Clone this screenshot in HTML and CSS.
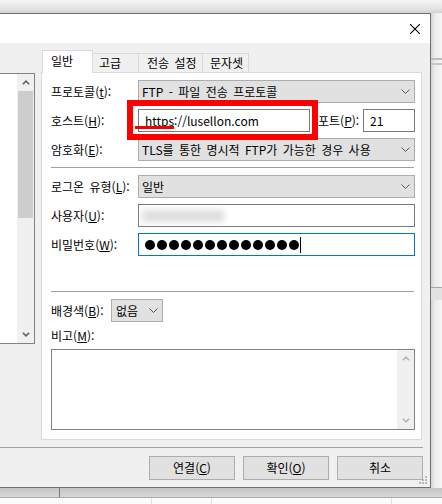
FILE: index.html
```html
<!DOCTYPE html>
<html lang="ko">
<head>
<meta charset="utf-8">
<title>사이트 관리자</title>
<link rel="stylesheet" href="styles.css">
</head>
<body>
<div class="screen">
  <div class="topshade"></div>
  <div class="middle">
    <div class="dialog">
      <div class="titlebar">
        <svg class="close" width="10" height="10" viewBox="0 0 10 10"><path d="M0 0L10 10M10 0L0 10" stroke="#000" stroke-width="1.1" fill="none"/></svg>
      </div>
      <div class="dbody">
        <div class="sitelist">
          <div class="vscroll">
            <div class="sarrow"><svg width="8" height="5" viewBox="0 0 8 5"><polyline points="0.8,4.3 4,1.2 7.2,4.3" stroke="#606060" stroke-width="1.6" fill="none"/></svg></div>
            <div class="thumb"></div>
            <div class="sfill"></div>
            <div class="sarrow"><svg width="8" height="5" viewBox="0 0 8 5"><polyline points="0.8,0.7 4,3.8 7.2,0.7" stroke="#606060" stroke-width="1.6" fill="none"/></svg></div>
          </div>
        </div>
        <div class="tabsection">
          <div class="tabs">
            <div class="tab active t1">일반</div>
            <div class="tab t2">고급</div>
            <div class="tab t3">전송 설정</div>
            <div class="tab t4">문자셋</div>
          </div>
          <div class="panel">
            <div class="row">
              <div class="lbl">프로토콜(<u>t</u>):</div>
              <div class="select grow"><span>FTP - 파일 전송 프로토콜</span><svg class="chev" width="9" height="5" viewBox="0 0 9 5"><polyline points="0.5,0.5 4.5,4.5 8.5,0.5" stroke="#555" stroke-width="1" fill="none"/></svg></div>
            </div>
            <div class="row">
              <div class="lbl">호스트(<u>H</u>):</div>
              <div class="input host">https://lusellon.com</div>
              <div class="plbl">포트(<u>P</u>):</div>
              <div class="input port grow">21</div>
            </div>
            <div class="row">
              <div class="lbl">암호화(<u>E</u>):</div>
              <div class="select grow"><span>TLS를 통한 명시적 FTP가 가능한 경우 사용</span><svg class="chev" width="9" height="5" viewBox="0 0 9 5"><polyline points="0.5,0.5 4.5,4.5 8.5,0.5" stroke="#555" stroke-width="1" fill="none"/></svg></div>
            </div>
            <div class="sep"></div>
            <div class="row">
              <div class="lbl">로그온 유형(<u>L</u>):</div>
              <div class="select grow"><span>일반</span><svg class="chev" width="9" height="5" viewBox="0 0 9 5"><polyline points="0.5,0.5 4.5,4.5 8.5,0.5" stroke="#555" stroke-width="1" fill="none"/></svg></div>
            </div>
            <div class="row">
              <div class="lbl">사용자(<u>U</u>):</div>
              <div class="input grow user"><div class="blurred"></div></div>
            </div>
            <div class="row pwrow">
              <div class="lbl">비밀번호(<u>W</u>):</div>
              <div class="input grow focus">
                <div class="dots">
                  <i></i><i></i><i></i><i></i><i></i><i></i><i></i><i></i><i></i><i></i><i></i><i></i><i></i>
                </div>
                <div class="caret"></div>
              </div>
            </div>
            <div class="sep"></div>
            <div class="row">
              <div class="lbl bglbl">배경색(<u>B</u>):</div>
              <div class="select small"><span>없음</span><svg class="chev" width="9" height="5" viewBox="0 0 9 5"><polyline points="0.5,0.5 4.5,4.5 8.5,0.5" stroke="#555" stroke-width="1" fill="none"/></svg></div>
            </div>
            <div class="memolbl">비고(<u>M</u>):</div>
            <div class="memo">
              <div class="mscroll">
                <div class="sarrow"><svg width="8" height="5" viewBox="0 0 8 5"><polyline points="0.8,4.3 4,1.2 7.2,4.3" stroke="#b4b4b4" stroke-width="1.6" fill="none"/></svg></div>
                <div class="sfill"></div>
                <div class="sarrow"><svg width="8" height="5" viewBox="0 0 8 5"><polyline points="0.8,0.7 4,3.8 7.2,0.7" stroke="#b4b4b4" stroke-width="1.6" fill="none"/></svg></div>
              </div>
            </div>
          </div>
        </div>
      </div>
      <div class="footsep"></div>
      <div class="buttons">
        <div class="btn">연결(<u>C</u>)</div>
        <div class="btn">확인(<u>O</u>)</div>
        <div class="btn">취소</div>
      </div>
      <svg class="grip" width="8" height="8" viewBox="0 0 8 8">
        <rect x="6" y="0" width="2" height="2" fill="#b8b8b8"/>
        <rect x="3" y="3" width="2" height="2" fill="#b8b8b8"/>
        <rect x="6" y="3" width="2" height="2" fill="#b8b8b8"/>
        <rect x="0" y="6" width="2" height="2" fill="#b8b8b8"/>
        <rect x="3" y="6" width="2" height="2" fill="#b8b8b8"/>
        <rect x="6" y="6" width="2" height="2" fill="#b8b8b8"/>
      </svg>
    </div>
    <div class="rightside">
      <div class="rs-gap1"></div>
      <div class="rs-line1"></div>
      <div class="rs-gap2"></div>
      <div class="rs-line2"></div>
      <div class="rs-gap3"></div>
      <div class="rs-line3"></div>
      <div class="rs-band"></div>
    </div>
  </div>
  <div class="behind">
    <div class="bband"><div class="bb-left"></div><div class="bb-rest"></div></div>
    <div class="bline"></div>
    <div class="brow">
      <div class="bc c1"></div><div class="bc c2"></div><div class="bc c3"></div><div class="bc c4"></div>
    </div>
  </div>
  <div class="redbox"></div>
  <div class="redline"></div>
</div>
</body>
</html>
```

FILE: styles.css
```css
html, body {
  margin: 0;
  padding: 0;
}
body {
  width: 442px;
  height: 504px;
  overflow: hidden;
  font-family: "Noto Sans CJK KR", "Noto Sans", sans-serif;
  font-size: 12px;
  line-height: 16px;
  word-spacing: 2px;
  color: #000;
}
u {
  text-decoration: underline;
  text-underline-offset: 1px;
}
.screen {
  position: relative;
  width: 442px;
  height: 504px;
  display: flex;
  flex-direction: column;
  background: #f0f0f0;
}
.topshade {
  flex: none;
  height: 13px;
  background: linear-gradient(#f4f4f4, #e2e2e2 70%, #d2d2d2);
}
.middle {
  flex: none;
  height: 475px;
  display: flex;
}
.dialog {
  position: relative;
  flex: none;
  width: 431px;
  height: 475px;
  box-sizing: border-box;
  border: 1px solid #6f6f6f;
  border-left: none;
  background: #f0f0f0;
  display: flex;
  flex-direction: column;
}
.titlebar {
  flex: none;
  height: 29px;
  background: #fff;
  display: flex;
  justify-content: flex-end;
  align-items: center;
  padding-right: 10px;
}
.close {
  display: block;
  margin-top: 1px;
}
.dbody {
  flex: none;
  display: flex;
  align-items: flex-start;
  gap: 6px;
  padding-top: 7px;
}
.sitelist {
  flex: none;
  width: 35px;
  height: 271px;
  margin-top: 23px;
  box-sizing: border-box;
  border: 1px solid #828282;
  border-left: none;
  background: #fff;
  display: flex;
  justify-content: flex-end;
}
.vscroll {
  width: 17px;
  height: 100%;
  background: #f0f0f0;
  display: flex;
  flex-direction: column;
  align-items: center;
}
.sarrow {
  flex: none;
  width: 17px;
  height: 17px;
  display: flex;
  align-items: center;
  justify-content: center;
}
.sarrow svg {
  display: block;
}
.thumb {
  flex: none;
  width: 15px;
  height: 127px;
  background: #cdcdcd;
}
.sfill {
  flex: 1;
}
.tabsection {
  flex: none;
  width: 381px;
}
.tabs {
  display: flex;
  align-items: flex-end;
  height: 22px;
  padding-left: 1px;
}
.tab {
  flex: none;
  box-sizing: border-box;
  height: 19px;
  border: 1px solid #d9d9d9;
  border-bottom: none;
  background: #f0f0f0;
  display: flex;
  align-items: center;
  margin-left: -1px;
  white-space: nowrap;
}
.tab.active {
  position: relative;
  z-index: 1;
  height: 23px;
  margin-bottom: -1px;
  margin-left: 0;
  background: #fff;
  padding-bottom: 2px;
}
.t1 { width: 51px; padding-left: 8px; }
.t2 { width: 47px; padding-left: 6px; }
.t3 { width: 65px; padding-left: 8px; }
.t4 { width: 47px; padding-left: 7px; }
.panel {
  box-sizing: border-box;
  height: 368px;
  border: 1px solid #d9d9d9;
  background: #fff;
  padding: 7px 6px 8px 9px;
}
.row {
  display: flex;
  align-items: center;
  height: 23px;
  margin-bottom: 6px;
}
.pwrow {
  margin-bottom: 35px;
}
.lbl {
  flex: none;
  width: 87px;
  white-space: nowrap;
}
.bglbl {
  width: 60px;
}
.grow {
  flex: 1;
}
.select {
  box-sizing: border-box;
  height: 23px;
  border: 1px solid #adadad;
  background: #e1e1e1;
  display: flex;
  align-items: center;
  justify-content: space-between;
  padding-left: 3px;
  padding-right: 4px;
  white-space: nowrap;
  overflow: hidden;
}
.select.small {
  flex: none;
  width: 52px;
  padding-left: 4px;
  padding-right: 4px;
}
.chev {
  flex: none;
  display: block;
}
.input {
  box-sizing: border-box;
  height: 23px;
  border: 1px solid #7a7a7a;
  background: #fff;
  display: flex;
  align-items: center;
  padding-left: 6px;
  white-space: nowrap;
}
.host {
  flex: none;
  width: 172px;
}
.plbl {
  flex: none;
  width: 45px;
  margin-left: 8px;
  white-space: nowrap;
}
.port {
  padding-left: 6px;
}
.user {
  padding-left: 3px;
}
.blurred {
  width: 82px;
  height: 12px;
  background: #d6d6d6;
  filter: blur(3px);
  opacity: 0.8;
}
.focus {
  border-color: #0078d7;
  padding-left: 6px;
}
.dots {
  display: flex;
  gap: 2px;
}
.dots i {
  display: block;
  width: 10px;
  height: 10px;
  border-radius: 50%;
  background: #000;
}
.caret {
  width: 1px;
  height: 16px;
  background: #000;
  margin-left: 1px;
}
.sep {
  height: 1px;
  background: #a0a0a0;
  margin-bottom: 7px;
  margin-right: 1px;
}
.memolbl {
  margin-top: 1px;
  height: 16px;
  margin-bottom: 5px;
  white-space: nowrap;
}
.memo {
  box-sizing: border-box;
  height: 81px;
  border: 1px solid #828282;
  background: #fff;
  display: flex;
  justify-content: flex-end;
}
.mscroll {
  width: 17px;
  height: 100%;
  background: #f0f0f0;
  display: flex;
  flex-direction: column;
}
.footsep {
  flex: none;
  height: 1px;
  width: 423px;
  margin-top: 7px;
  background: #a0a0a0;
}
.buttons {
  flex: none;
  display: flex;
  justify-content: flex-end;
  gap: 8px;
  margin-top: 8px;
  padding-right: 7px;
}
.btn {
  box-sizing: border-box;
  width: 86px;
  height: 24px;
  border: 1px solid #adadad;
  background: #e1e1e1;
  display: flex;
  align-items: center;
  justify-content: center;
  white-space: nowrap;
}
.grip {
  position: absolute;
  right: 3px;
  bottom: 3px;
}
.rightside {
  flex: none;
  width: 11px;
  display: flex;
  flex-direction: column;
  background: linear-gradient(to right, #d4d4d4, #ececec 4px, #f5f5f5);
}
.rs-gap1 { height: 45px; }
.rs-line1 { height: 2px; background: #bdbdbd; }
.rs-gap2 { height: 3px; }
.rs-line2 { height: 2px; background: #c8c8c8; }
.rs-gap3 { height: 222px; }
.rs-line3 { height: 1px; background: #a8a8a8; }
.rs-band { height: 12px; background: #e2e2e2; }
.behind {
  flex: none;
  height: 16px;
  display: flex;
  flex-direction: column;
}
.bband {
  height: 9px;
  display: flex;
  background: linear-gradient(#c4c4c4, #d8d8d8);
}
.bb-left {
  width: 60px;
  border-right: 1px solid #7a7a7a;
  box-sizing: border-box;
}
.bb-rest {
  flex: 1;
}
.bline {
  height: 1px;
  background: #a8a8a8;
}
.brow {
  flex: 1;
  display: flex;
  background: #fbfbfb;
}
.bc {
  box-sizing: border-box;
  border-right: 1px solid #e2e2e2;
}
.c1 { width: 152px; }
.c2 { width: 60px; }
.c3 { width: 180px; }
.c4 { flex: 1; border-right: none; }
.redbox {
  position: absolute;
  left: 127px;
  top: 100px;
  width: 191px;
  height: 40px;
  box-sizing: border-box;
  border: 6px solid #ff0000;
}
.redline {
  position: absolute;
  left: 135px;
  top: 126px;
  width: 39px;
  height: 3px;
  background: #f00000;
}
```
